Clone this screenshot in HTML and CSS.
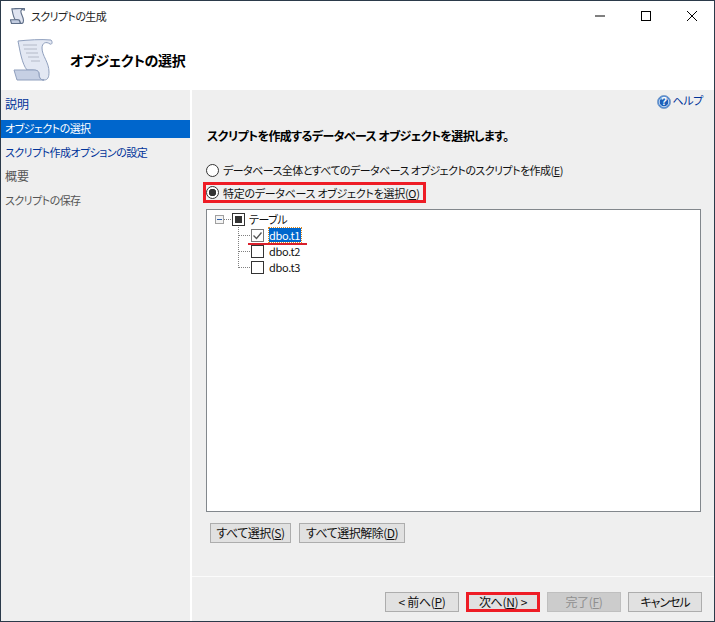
FILE: index.html
```html
<!DOCTYPE html>
<html lang="ja">
<head>
<meta charset="utf-8">
<title>スクリプトの生成</title>
<link rel="stylesheet" href="styles.css">
</head>
<body>
<div class="window">
  <div class="titlebar">
    <svg class="title-icon" width="15" height="16" viewBox="0 0 40 42">
      <path d="M5 2C15 1 28 0 38 1c2 2 1 5-1 4-4-3-8-1-8 4 0 8 7 14 7 24 0 5-1 8-5 8s-5-3-5-6c0-4-4-4-7-4h-5C9 25 7 12 5 2z" fill="#dfe4f0" stroke="#5f6f88" stroke-width="3"/>
      <path d="M1 31h18c3 0 7 0 7 4 0 3 1 6 5 6H4z" fill="#c2cce0" stroke="#5f6f88" stroke-width="3"/>
    </svg>
    <span class="title-text">スクリプトの生成</span>
    <div class="win-controls">
      <svg width="46" height="30" viewBox="0 0 46 30"><path d="M18 15h10" stroke="#000"/></svg>
      <svg width="46" height="30" viewBox="0 0 46 30"><rect x="18.500" y="10.500" width="9" height="9" fill="none" stroke="#000"/></svg>
      <svg width="46" height="30" viewBox="0 0 46 30"><path d="M18 10l10 10M28 10L18 20" stroke="#000" fill="none"/></svg>
    </div>
  </div>
  <div class="header">
    <svg class="scroll-icon" width="40" height="42" viewBox="0 0 40 42">
      <path d="M5 2C15 1 28 0 38 1c2 2 1 5-1 4-4-3-8-1-8 4 0 8 7 14 7 24 0 5-1 8-5 8s-5-3-5-6c0-4-4-4-7-4h-5C9 25 7 12 5 2z" fill="#e3e8f3" stroke="#8f9fbd"/>
      <path d="M1 31h18c3 0 7 0 7 4 0 3 1 6 5 6H4z" fill="#c6d0e4" stroke="#8f9fbd"/>
      <path d="M10 6h14M11 10h13M13 14h12M15 18h11M18 22h9" stroke="#b4bac8" fill="none"/>
    </svg>
    <h1 class="header-title">オブジェクトの選択</h1>
  </div>
  <div class="body">
    <nav class="sidebar">
      <a class="nav-item link kanji">説明</a>
      <a class="nav-item active">オブジェクトの選択</a>
      <a class="nav-item link">スクリプト作成オプションの設定</a>
      <a class="nav-item muted kanji">概要</a>
      <a class="nav-item muted">スクリプトの保存</a>
    </nav>
    <main class="main">
      <div class="content">
        <div class="help-row">
          <svg width="14" height="14" viewBox="0 0 14 14"><circle cx="7" cy="7" r="6.500" fill="#3f7fd0" stroke="#7f9fc8"/><circle cx="7" cy="7" r="4.800" fill="#1d5fb8" stroke="#cfe0f5"/><text x="7" y="10" text-anchor="middle" class="q">?</text></svg>
          <span class="help-text">ヘルプ</span>
        </div>
        <p class="lead">スクリプトを作成するデータベース オブジェクトを選択します。</p>
        <label class="radio-row radio-first"><span class="radio"></span>データベース全体とすべてのデータベース オブジェクトのスクリプトを作成(<u>E</u>)</label>
        <label class="radio-row radio-second"><span class="radio on"></span>特定のデータベース オブジェクトを選択(<u>O</u>)</label>
        <div class="tree">
          <div class="tree-root">
            <span class="expander"></span><span class="dots-h"></span><span class="check partial"></span><span class="node-label root-label">テーブル</span>
          </div>
          <ul class="tree-children">
            <li class="tree-row"><span class="dots-h long"></span><span class="check checked"><svg width="11" height="11" viewBox="0 0 11 11"><path d="M1.500 5.500l3 3 5-6" fill="none" stroke="#555" stroke-width="1.300"/></svg></span><span class="node-label selected">dbo.t1</span><span class="underline-mark"></span></li>
            <li class="tree-row"><span class="dots-h long"></span><span class="check"></span><span class="node-label">dbo.t2</span></li>
            <li class="tree-row last"><span class="dots-h long"></span><span class="check"></span><span class="node-label">dbo.t3</span></li>
          </ul>
        </div>
        <div class="select-buttons">
          <button class="btn sel-a">すべて選択(<u>S</u>)</button>
          <button class="btn sel-b">すべて選択解除(<u>D</u>)</button>
        </div>
      </div>
      <footer class="footer">
        <button class="btn nav-btn">&lt; 前へ(<u>P</u>)</button>
        <button class="btn nav-btn next">次へ(<u>N</u>) &gt;</button>
        <button class="btn nav-btn disabled">完了(<u>F</u>)</button>
        <button class="btn nav-btn cancel">キャンセル</button>
      </footer>
    </main>
  </div>
</div>
</body>
</html>
```
FILE: styles.css
```css
* { box-sizing: border-box; }
html, body { margin: 0; padding: 0; }
body {
  width: 715px;
  height: 622px;
  overflow: hidden;
  font-family: "Noto Sans CJK JP", "Noto Sans", sans-serif;
  font-size: 12px;
  font-feature-settings: "palt";
  color: #000;
  background: #fff;
}
.window {
  width: 715px;
  height: 622px;
  display: flex;
  flex-direction: column;
  border: 1px solid #2b3a4a;
  background: #fff;
}
.titlebar {
  height: 30px;
  flex: none;
  display: flex;
  align-items: center;
  padding-left: 9px;
  background: #fff;
}
.title-icon { margin-right: 6px; }
.title-text { font-size: 11px; letter-spacing: -0.6px; color: #222; }
.win-controls { margin-left: auto; display: flex; margin-right: -1px; }
.win-controls svg { display: block; }
.header {
  height: 59px;
  flex: none;
  display: flex;
  align-items: center;
  padding-left: 12px;
  padding-bottom: 2px;
}
.scroll-icon { flex: none; }
.header-title {
  margin: 0 0 0 17px;
  font-size: 14px;
  font-weight: 700;
  line-height: 20px;
  letter-spacing: -0.33px;
}
.body { flex: 1; display: flex; min-height: 0; }
.sidebar {
  width: 189px;
  flex: none;
  background: #efefef;
  padding-top: 6px;
  margin-right: 2px;
  display: flex;
  flex-direction: column;
}
.nav-item {
  height: 18px;
  margin-bottom: 6px;
  padding-left: 4px;
  line-height: 16px;
  font-size: 11px;
  letter-spacing: -0.55px;
  white-space: nowrap;
}
.nav-item.kanji { font-size: 12px; letter-spacing: 0; }
.link { color: #003399; }
.muted { color: #555; }
.active { background: #0066cc; color: #fff; }
.main {
  flex: 1;
  min-width: 0;
  background: #efefef;
  display: flex;
  flex-direction: column;
}
.content { height: 487px; flex: none; padding: 0 13px 0 14px; border-bottom: 1px solid #fbfbfb; }
.help-row {
  display: flex;
  justify-content: flex-end;
  align-items: center;
  gap: 1px;
  height: 16px;
  margin: 4px -2px 0 0;
}
.help-text { color: #003399; font-size: 11px; line-height: 14px; letter-spacing: -0.3px; position: relative; top: -2px; }
.q { font: 700 10px "Liberation Sans", sans-serif; fill: #fff; }
.lead { margin: 17px 0 0 1px; font-size: 12px; font-weight: 700; line-height: 18px; letter-spacing: -0.6px; white-space: nowrap; }
.radio-row {
  display: flex;
  align-items: center;
  height: 18px;
  font-size: 11px;
  white-space: nowrap;
  color: #111;
}
.radio-first { margin-top: 16px; letter-spacing: -0.55px; }
.radio-second {
  margin: 3px 0 0 -3px;
  width: 223px;
  height: 21px;
  padding-left: 3px;
  letter-spacing: -0.28px;
  outline: 3px solid #ee1c25;
  outline-offset: -3px;
}
.radio {
  width: 13px;
  height: 13px;
  border: 1px solid #333;
  border-radius: 50%;
  background: #fff;
  margin-right: 4px;
  flex: none;
}
.radio.on { background: radial-gradient(circle, #333 0 3.500px, #fff 4px); }
u { text-underline-offset: 1px; }
.tree {
  margin-top: 6px;
  height: 303px;
  background: #fff;
  border: 1px solid #82878c;
  padding: 1px 0 0 8px;
}
.tree-root {
  display: flex;
  align-items: center;
  height: 16px;
}
.expander {
  width: 9px;
  height: 9px;
  border: 1px solid #a0a0a0;
  background: linear-gradient(#2d5ea8, #2d5ea8) center / 5px 1px no-repeat #f4f4f4;
  flex: none;
}
.dots-h {
  width: 7px;
  border-top: 1px dotted #808080;
  flex: none;
}
.dots-h.long { width: 11px; }
.check {
  width: 13px;
  height: 13px;
  border: 1px solid #333;
  background: #fff;
  flex: none;
  display: flex;
  align-items: center;
  justify-content: center;
  margin-left: 1px;
}
.check.checked { border-color: #777; }
.check.partial { background: linear-gradient(#333, #333) center / 7px 7px no-repeat #fff; }
.node-label {
  margin-left: 5px;
  font-size: 11px;
  line-height: 14px;
  padding: 0 1px 0 0;
  letter-spacing: -0.3px;
  color: #111;
}
.root-label { margin-left: 4px; letter-spacing: -0.5px; }
.node-label.selected {
  background: #0066cc;
  color: #fff;
  outline: 1px dotted #e08a20;
}
.tree-children {
  list-style: none;
  margin: 0;
  padding: 0 0 0 24px;
  position: relative;
}
.tree-children::before {
  content: "";
  position: absolute;
  left: 23px;
  top: 0;
  height: 41px;
  border-left: 1px dotted #808080;
}
.tree-row {
  position: relative;
  display: flex;
  align-items: center;
  height: 16px;
}
.underline-mark {
  position: absolute;
  left: 9px;
  top: 16px;
  width: 59px;
  height: 2px;
  background: #d9202c;
}
.btn {
  font-family: inherit;
  font-size: 12px;
  font-feature-settings: "palt";
  line-height: 16px;
  padding: 0;
  background: #e1e1e1;
  border: 1px solid #adadad;
  color: #111;
  text-align: center;
  white-space: nowrap;
}
.select-buttons { display: flex; gap: 8px; margin: 11px 0 0 4px; }
.sel-a { width: 81px; height: 20px; letter-spacing: -0.5px; }
.sel-b { width: 106px; height: 20px; letter-spacing: -0.5px; }
.footer {
  flex: 1;
  display: flex;
  justify-content: flex-end;
  gap: 7px;
  padding: 15px 12px 0 0;
  align-items: flex-start;
}
.nav-btn { width: 74px; height: 20px; letter-spacing: -0.3px; }
.nav-btn.cancel { letter-spacing: -1px; }
.next { border: 3px solid #ee1c25; line-height: 14px; }
.disabled { background: #ccc; color: #8f8f8f; border-color: #bfbfbf; }
```
